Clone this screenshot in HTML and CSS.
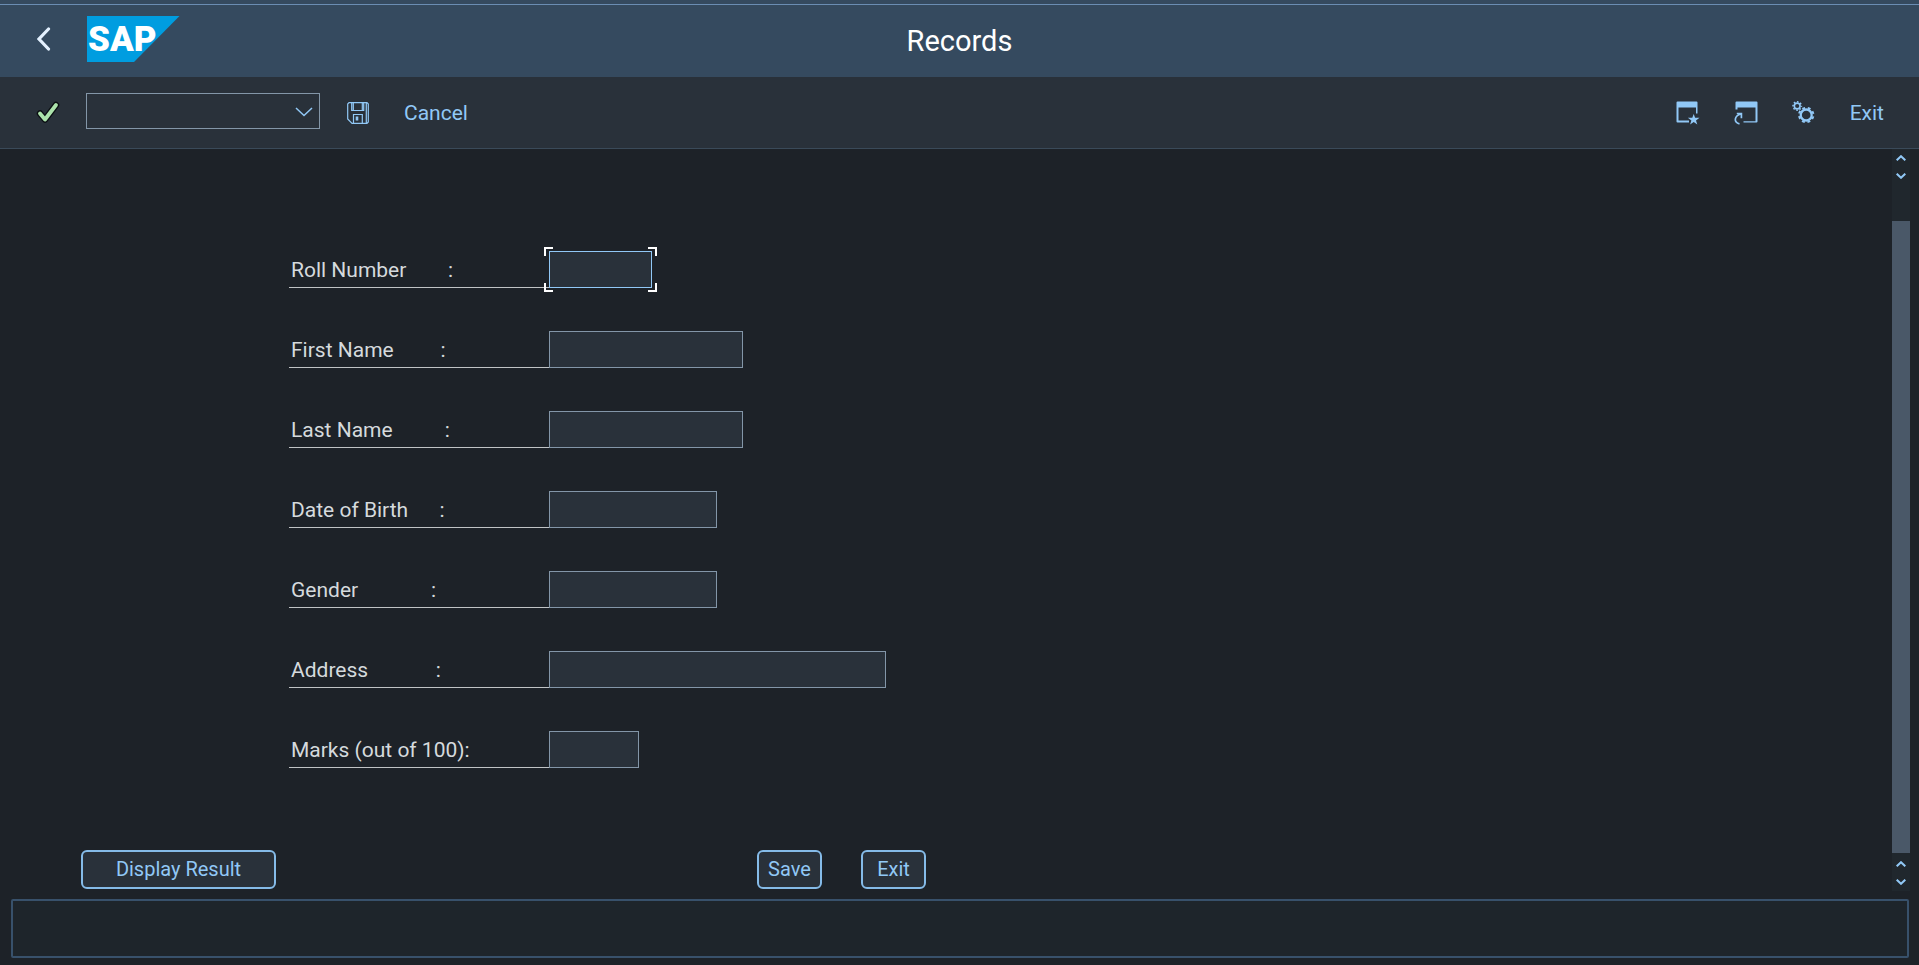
FILE: index.html
```html
<!DOCTYPE html>
<html lang="en">
<head>
<meta charset="utf-8">
<title>Records</title>
<link rel="stylesheet" href="styles.css">
</head>
<body>
<div class="app">
  <header class="shell">
    <div class="shell-left">
      <button class="icon-btn back" type="button" aria-label="Back">
        <svg width="14" height="24" viewBox="0 0 14 24"><path d="M11.500 2 2 12l9.500 10" fill="none" stroke="#e4f1ff" stroke-width="3.200" stroke-linecap="round"/></svg>
      </button>
      <svg class="logo" width="93" height="46" viewBox="0 0 93 46" role="img" aria-label="SAP">
        <path d="M0 0H92.500L47 46H0Z" fill="#009de0"/>
        <text class="logo-text" x="1" y="35">SAP</text>
      </svg>
    </div>
    <h1 class="title">Records</h1>
    <div class="shell-right"></div>
  </header>

  <div class="toolbar">
    <button class="icon-btn confirm" type="button" aria-label="Enter">
      <svg width="24" height="24" viewBox="0 0 24 24" fill="none" stroke-linecap="round" stroke-linejoin="round"><path d="M4 12.500l5 6L20 4" stroke="#0b0f12" stroke-width="6.500"/><path d="M4 12.500l5 6L20 4" stroke="#abe2ab" stroke-width="3.800"/></svg>
    </button>
    <div class="combo">
      <select class="command" aria-label="Command"><option></option></select>
      <svg class="combo-arrow" width="18" height="10" viewBox="0 0 18 10"><path d="M1 1l8 7.500L17 1" fill="none" stroke="#91c8f6" stroke-width="1.500"/></svg>
    </div>
    <button class="icon-btn save-icon" type="button" aria-label="Save">
      <svg width="22" height="22" viewBox="0 0 22 22" fill="none" stroke="#91c8f6" stroke-width="1.200"><path d="M2 .700H20L21.300 2V20L20 21.300H5L.700 17V2Z"/><path d="M4.700 1V8.500H16.700V1M6.500 21V12.500H15.300V21M6.300 1V8M15.300 1V8M19.300 1V21"/><path d="M9.300 15h1.400v3h-1.400z" fill="#91c8f6"/></svg>
    </button>
    <button class="text-btn" type="button">Cancel</button>
    <div class="tools">
      <button class="icon-btn" type="button" aria-label="Create new window">
        <svg width="24" height="24" viewBox="0 0 24 24"><path d="M1.500.500h19A1 1 0 0 1 21.500 1.500V12.500H20V6.500H2.500V19.500H13V21.500H1.500A1 1 0 0 1 .500 20.500V1.500A1 1 0 0 1 1.500.500Z" fill="#91c8f6"/><path d="M17.700 13l1.400 3.700 4.400.100-3.500 2.600 1.300 4.100-3.600-2.400-3.600 2.400 1.300-4.100-3.500-2.600 4.400-.100Z" fill="#91c8f6"/></svg>
      </button>
      <button class="icon-btn" type="button" aria-label="Create shortcut">
        <svg width="24" height="24" viewBox="0 0 24 24"><path d="M2.500.500h20A1 1 0 0 1 23.500 1.500V20.500A1 1 0 0 1 22.500 21.500H9.500V20.200H21.500V6.500H3.500V8.500H1.500V1.500A1 1 0 0 1 2.500.500Z" fill="#91c8f6"/><path d="M5.500 22.800C-.500 21.500 0 15 6.800 13M2.800 12.500H7.400V17.200" fill="none" stroke="#91c8f6" stroke-width="1.700"/></svg>
      </button>
      <button class="icon-btn" type="button" aria-label="Settings">
        <svg width="24" height="24" viewBox="0 0 24 24" fill="none" stroke="#91c8f6">
          <circle cx="5.200" cy="5" r="2.900" stroke-width="1.600"/>
          <circle cx="5.200" cy="5" r="4.200" stroke-width="1.500" stroke-dasharray="1.600 1.699" stroke-dashoffset=".800"/>
          <circle cx="14.200" cy="14" r="5.500" stroke-width="2.300"/>
          <circle cx="14.200" cy="14" r="7.200" stroke-width="2" stroke-dasharray="2.900 2.755" stroke-dashoffset="4.278"/>
        </svg>
      </button>
      <button class="text-btn" type="button">Exit</button>
    </div>
  </div>

  <main class="screen">
    <form class="content">
      <div class="fields">
        <div class="field"><label class="label" for="roll">Roll Number&nbsp;&nbsp;&nbsp;&nbsp;&nbsp;&nbsp;&nbsp;&nbsp;:</label><span class="focus-box"><input class="input w-roll" id="roll" type="text"><i class="corner tl"></i><i class="corner tr"></i><i class="corner bl"></i><i class="corner br"></i></span></div>
        <div class="field"><label class="label" for="first">First Name&nbsp;&nbsp;&nbsp;&nbsp;&nbsp;&nbsp;&nbsp;&nbsp;&nbsp;:</label><input class="input w-name" id="first" type="text"></div>
        <div class="field"><label class="label" for="last">Last Name&nbsp;&nbsp;&nbsp;&nbsp;&nbsp;&nbsp;&nbsp;&nbsp;&nbsp;&nbsp;:</label><input class="input w-name" id="last" type="text"></div>
        <div class="field"><label class="label" for="dob">Date of Birth&nbsp;&nbsp;&nbsp;&nbsp;&nbsp;&nbsp;:</label><input class="input w-mid" id="dob" type="text"></div>
        <div class="field"><label class="label" for="gender">Gender&nbsp;&nbsp;&nbsp;&nbsp;&nbsp;&nbsp;&nbsp;&nbsp;&nbsp;&nbsp;&nbsp;&nbsp;&nbsp;&nbsp;:</label><input class="input w-mid" id="gender" type="text"></div>
        <div class="field"><label class="label" for="address">Address&nbsp;&nbsp;&nbsp;&nbsp;&nbsp;&nbsp;&nbsp;&nbsp;&nbsp;&nbsp;&nbsp;&nbsp;&nbsp;:</label><input class="input w-address" id="address" type="text"></div>
        <div class="field"><label class="label" for="marks">Marks (out of 100):</label><input class="input w-marks" id="marks" type="text"></div>
      </div>
      <div class="actions">
        <button class="action wide" type="button">Display Result</button>
        <button class="action" type="button">Save</button>
        <button class="action" type="button">Exit</button>
      </div>
    </form>
    <div class="scrollbar">
      <div class="arrows">
        <svg width="10" height="6" viewBox="0 0 10 6"><path d="M.700 5.300 5 1.200l4.300 4.100"/></svg>
        <svg width="10" height="6" viewBox="0 0 10 6"><path d="M.700.700 5 4.800 9.300.700"/></svg>
      </div>
      <div class="thumb"></div>
      <div class="arrows bottom">
        <svg width="10" height="6" viewBox="0 0 10 6"><path d="M.700 5.300 5 1.200l4.300 4.100"/></svg>
        <svg width="10" height="6" viewBox="0 0 10 6"><path d="M.700.700 5 4.800 9.300.700"/></svg>
      </div>
    </div>
  </main>
  <footer class="status"></footer>
</div>
</body>
</html>
```
FILE: styles.css
```css
* { box-sizing: border-box; }

body {
  margin: 0;
  background: #1d2228;
  color: #d5dadd;
  font: 21px/24px Roboto, "Liberation Sans", sans-serif;
}

button, input, select { font: inherit; }

button {
  padding: 0;
  border: 0;
  background: none;
  color: #91c8f6;
}

svg { display: block; }

.app {
  display: flex;
  flex-direction: column;
  min-height: 100vh;
  border-top: 4px solid #354a5f;
}

.shell {
  display: grid;
  grid-template-columns: 1fr auto 1fr;
  align-items: center;
  height: 73px;
  background: #354a5f;
  border-top: 1px solid #6b8db3;
}

.shell-left {
  display: flex;
  align-items: center;
  gap: 35px;
  padding-left: 37px;
  padding-bottom: 4px;
}

.back { width: 15px; }

.title {
  margin: 0;
  color: #fff;
  font-size: 29px;
  line-height: 36px;
  font-weight: 400;
}

.logo-text {
  fill: #fff;
  font-size: 35px;
  font-weight: 900;
}

.toolbar {
  display: flex;
  align-items: center;
  height: 72px;
  padding: 0 35px 0 36px;
  background: #29313a;
  border-bottom: 1px solid #3a4a59;
}

.combo {
  position: relative;
  margin: 0 27px 3px 26px;
}

.command {
  display: block;
  width: 234px;
  height: 36px;
  padding: 0 32px 0 8px;
  appearance: none;
  background: #29313a;
  border: 1px solid #8396a8;
  border-radius: 0;
  color: #d5dadd;
}

.combo-arrow {
  position: absolute;
  right: 7px;
  top: 14px;
  pointer-events: none;
}

.save-icon { margin-right: 35px; }

.tools {
  display: flex;
  align-items: center;
  gap: 34px;
  margin-left: auto;
}

.screen {
  display: flex;
  flex: 1;
  justify-content: space-between;
}

.content {
  display: flex;
  flex: 1;
  flex-direction: column;
  justify-content: space-between;
  padding: 102px 0 2px;
}

.fields {
  display: grid;
  gap: 43px;
  padding-left: 289px;
}

.field { display: flex; }

.label {
  width: 260px;
  height: 37px;
  padding: 7px 0 0 2px;
  border-bottom: 1px solid #c0c3c5;
}

.input {
  display: block;
  height: 37px;
  padding: 0 4px;
  background: #29313a;
  border: 1px solid #8396a8;
  color: #d5dadd;
  outline: 0;
}

.w-roll { width: 103px; border-color: #91c8f6; }
.w-name { width: 194px; }
.w-mid { width: 168px; }
.w-address { width: 337px; }
.w-marks { width: 90px; }

.focus-box { position: relative; }

.corner {
  position: absolute;
  width: 9px;
  height: 9px;
  border: 0 solid #fff;
}

.tl { left: -5px; top: -4px; border-width: 2px 0 0 2px; }
.tr { right: -5px; top: -4px; border-width: 2px 2px 0 0; }
.bl { left: -5px; bottom: -4px; border-width: 0 0 2px 2px; }
.br { right: -5px; bottom: -4px; border-width: 0 2px 2px 0; }

.actions {
  display: flex;
  gap: 39px;
  padding-left: 81px;
}

.action {
  width: 65px;
  height: 39px;
  padding-bottom: 2px;
  background: #29313a;
  border: 2px solid #85bbe8;
  border-radius: 6px;
  font-size: 20px;
}

.wide {
  width: 195px;
  margin-right: 442px;
}

.scrollbar {
  display: flex;
  flex-direction: column;
  width: 18px;
  margin-right: 9px;
  background: #20272d;
}

.arrows {
  display: grid;
  align-content: start;
  justify-items: center;
  gap: 12px;
  height: 72px;
  padding-top: 6px;
  fill: none;
  stroke: #91c8f6;
  stroke-width: 2;
}

.bottom {
  height: 38px;
  padding-top: 8px;
}

.thumb {
  flex: 1;
  background: #4a5868;
}

.status {
  height: 59px;
  margin: 8px 10px 7px 11px;
  background: #1e252b;
  border: 2px solid #38516b;
  border-radius: 2px;
}
```
